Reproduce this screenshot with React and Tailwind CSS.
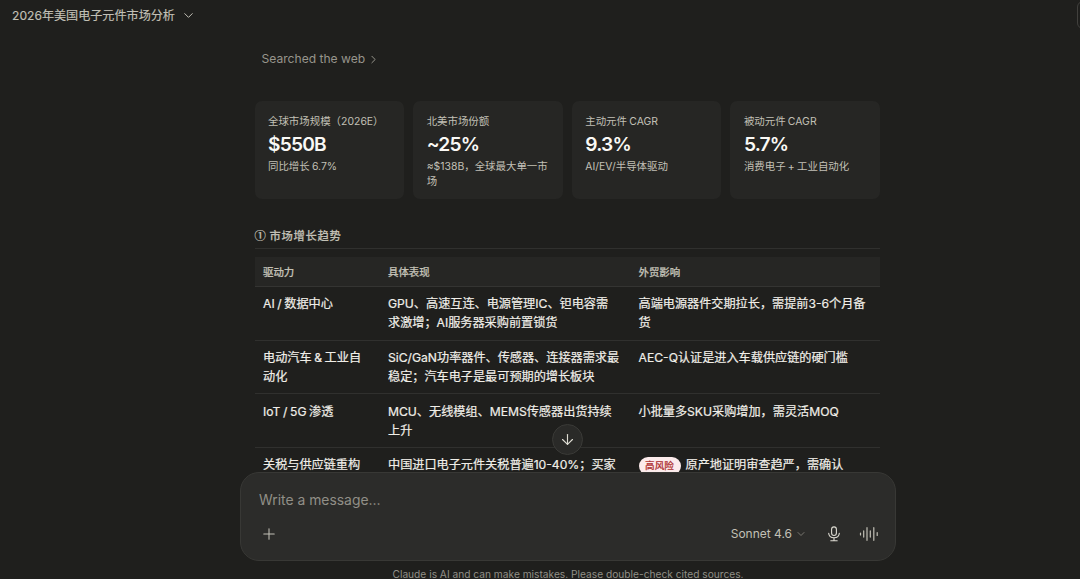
import { ArrowDown, ChevronDown, ChevronRight, Plus } from "lucide-react";

const stats = [
  { label: "全球市场规模（2026E）", value: "$550B", note: ["同比增长 6.7%"] },
  { label: "北美市场份额", value: "~25%", note: ["≈$138B，全球最大单一市", "场"] },
  { label: "主动元件 CAGR", value: "9.3%", note: ["AI/EV/半导体驱动"] },
  { label: "被动元件 CAGR", value: "5.7%", note: ["消费电子 + 工业自动化"] },
];

const rows = [
  {
    driver: ["AI / 数据中心"],
    detail: ["GPU、高速互连、电源管理IC、钽电容需", "求激增；AI服务器采购前置锁货"],
    impact: ["高端电源器件交期拉长，需提前3-6个月备", "货"],
  },
  {
    driver: ["电动汽车 & 工业自", "动化"],
    detail: ["SiC/GaN功率器件、传感器、连接器需求最", "稳定；汽车电子是最可预期的增长板块"],
    impact: ["AEC-Q认证是进入车载供应链的硬门槛"],
  },
  {
    driver: ["IoT / 5G 渗透"],
    detail: ["MCU、无线模组、MEMS传感器出货持续", "上升"],
    impact: ["小批量多SKU采购增加，需灵活MOQ"],
  },
  {
    driver: ["关税与供应链重构"],
    detail: ["中国进口电子元件关税普遍10-40%；买家"],
    impact: ["原产地证明审查趋严，需确认"],
    badge: "高风险",
  },
];

function Lines({ lines }) {
  return lines.map((line) => (
    <span key={line} className="block">
      {line}
    </span>
  ));
}

function StatCard({ label, value, note }) {
  return (
    <div className="h-[98px] rounded-[7px] bg-[#262624] pl-[13.5px] pt-[13px] text-[10.45px] text-[#c2c0b6] [word-spacing:-0.7px]">
      <div className="leading-[15px]">{label}</div>
      <div className="mt-[3px] text-[19.2px] font-semibold leading-[24px] tracking-[-0.8px] text-[#faf9f5]">{value}</div>
      <div className="mt-[3px] leading-[15px]">
        <Lines lines={note} />
      </div>
    </div>
  );
}

function Header() {
  return (
    <header className="flex h-[31px] shrink-0 items-start justify-between overflow-hidden">
      <div className="flex h-[31px] items-center gap-[6px] pl-3 text-[12.1px] text-[#c2c0b6] [-webkit-text-stroke:0.15px]">
        <span className="pt-px">2026年美国电子元件市场分析</span>
        <ChevronDown size={15} strokeWidth={1.6} />
      </div>
      {/* Edge of the side panel toggle */}
      <div className="mt-px -mr-[25px] h-7 w-7 rounded-md border border-[#41403d]" />
    </header>
  );
}

function DriverTable() {
  return (
    <div className="text-[12.15px] leading-[18.8px] text-[#f0eee8] [-webkit-text-stroke:0.2px] [word-spacing:-0.8px]">
      <div className="grid h-[30px] grid-cols-[125px_250.5px_250px] items-center border-b border-[#343432] bg-[#262624] pl-[8.5px] pt-[3px] text-[10.45px] font-medium text-[#c2c0b6]">
        <span>驱动力</span>
        <span>具体表现</span>
        <span>外贸影响</span>
      </div>
      {rows.map(({ driver, detail, impact, badge }) => (
        <div
          key={driver[0]}
          className="grid h-[53.7px] grid-cols-[125px_250.5px_250px] border-b border-[#30302e] pl-[8.5px] pt-[8.4px]"
        >
          <div>
            <Lines lines={driver} />
          </div>
          <div>
            <Lines lines={detail} />
          </div>
          {badge ? (
            <div className="flex items-start gap-[5px]">
              <span className="mt-[0.5px] h-[18px] w-[42px] rounded-full bg-[#fcebeb] text-center text-[9.6px] font-medium leading-[18px] text-[#b03434]">
                {badge}
              </span>
              <span>{impact[0]}</span>
            </div>
          ) : (
            <div>
              <Lines lines={impact} />
            </div>
          )}
        </div>
      ))}
    </div>
  );
}

function Mic() {
  return (
    <svg width="14" height="16" viewBox="0 0 14 16" fill="none" stroke="currentColor" strokeWidth="1.1" strokeLinecap="round">
      <rect x="4.6" y="0.9" width="4.8" height="8.6" rx="2.4" />
      <path d="M1.7 7.2c.2 2.9 2.3 4.6 5.3 4.6s5.1-1.7 5.3-4.6M7 11.8v2.8M3.8 14.8h6.4" />
    </svg>
  );
}

function VoiceBars() {
  return (
    <svg width="20" height="16" viewBox="0 0 20 16" fill="none" stroke="currentColor" strokeWidth="1.2" strokeLinecap="round">
      <path d="M1.5 7v2M4.7 4.9v6.2M8 1.7v12.6M11.3 4.9v6.2M14.8 1.7v12.6M18.2 6.6v2.8" />
    </svg>
  );
}

function Composer() {
  return (
    <div className="mx-auto flex h-[89px] w-[656px] shrink-0 flex-col rounded-[19px] border border-[#383835] bg-[#2c2c2a] pl-[18px] pr-4">
      <div className="mt-[17px] text-[13.9px] leading-5 text-[#918f87]">Write a message…</div>
      <div className="mt-[14px] flex h-5 items-center text-[#c2c0b6]">
        <Plus size={18} strokeWidth={1.4} className="ml-[1px]" />
        <span className="ml-auto text-[12px]">Sonnet 4.6</span>
        <ChevronDown size={12} strokeWidth={1.7} className="ml-[3px] text-[#85837b]" />
        <span className="ml-[20px] text-[#dedcd3]">
          <Mic />
        </span>
        <span className="ml-[18px] text-[#c2c0b6]">
          <VoiceBars />
        </span>
      </div>
    </div>
  );
}

export default function App() {
  return (
    <div className="relative flex h-[579px] w-[1080px] flex-col overflow-hidden whitespace-nowrap bg-[#1f1f1d] font-[Inter,'Noto_Sans_CJK_SC',sans-serif]">
      <Header />
      <div className="flex grow flex-col pl-14">
        <main className="mx-auto h-[441px] w-[626px] shrink-0 overflow-hidden pl-[0.5px] -translate-x-px">
          <div className="ml-[7px] mt-[19px] flex h-[18px] items-center gap-[2px] text-[12.1px] text-[#97958c]">
            Searched the web
            <ChevronRight size={13} strokeWidth={1.8} />
          </div>
          <div className="mt-[33px] grid grid-cols-4 gap-[9px]">
            {stats.map((stat) => (
              <StatCard key={stat.label} {...stat} />
            ))}
          </div>
          <h2 className="mt-[27px] mb-[8px] flex h-[23px] gap-[3px] border-b border-[#30302e] text-[11.3px] font-medium leading-[20px] tracking-[0.7px] text-[#c2c0b6] [-webkit-text-stroke:0.2px]">
            <span className="-mt-px font-['Noto_Sans_CJK_SC',sans-serif]">①</span>
            <span>市场增长趋势</span>
          </h2>
          <DriverTable />
        </main>
        <Composer />
        <footer className="mt-[4px] h-[14px] text-center text-[10.2px] leading-[18px] text-[#918f87]">
          Claude is AI and can make mistakes. Please double-check cited sources.
        </footer>
      </div>
      {/* Scroll to bottom */}
      <button
        aria-label="Scroll to bottom"
        className="absolute left-[552px] top-[424px] flex size-[31px] items-center justify-center rounded-full border border-[#3a3a37] bg-[#2a2a28] text-[#dedcd3]"
      >
        <ArrowDown size={17} strokeWidth={1.6} />
      </button>
    </div>
  );
}
